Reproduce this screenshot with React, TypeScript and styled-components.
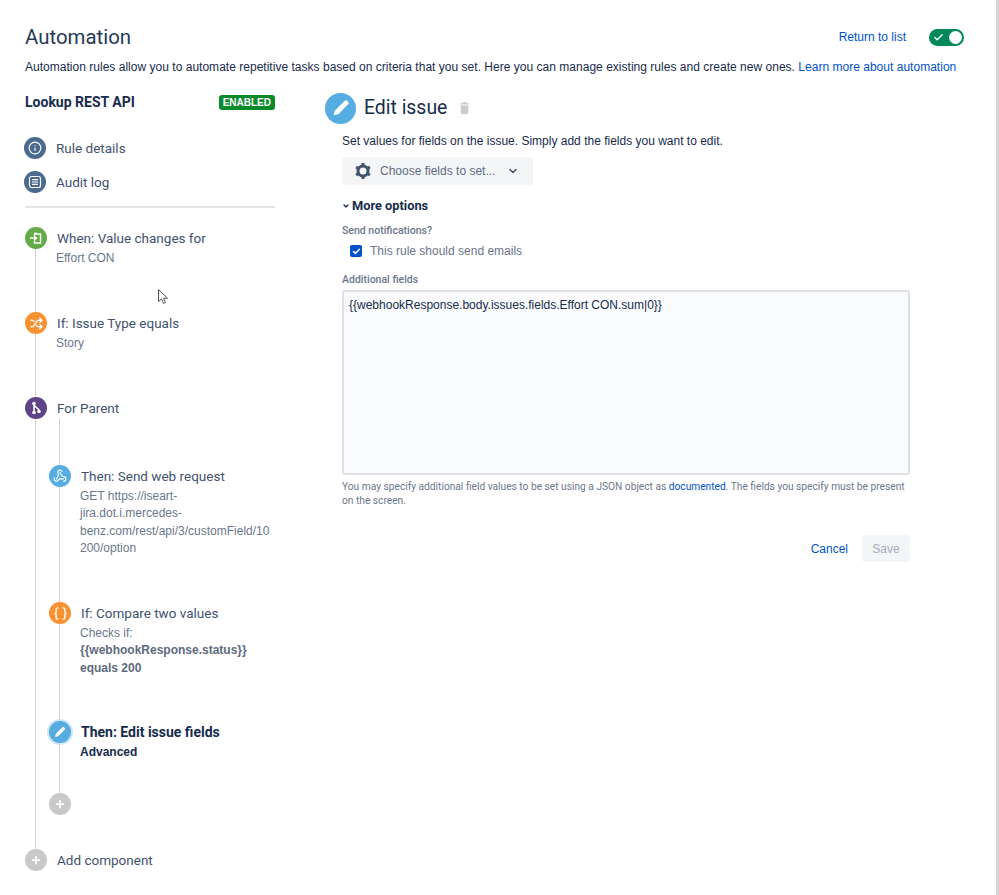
import React from "react";
import styled, { createGlobalStyle } from "styled-components";
import { Braces, Check, ChevronDown, Info, Plus, Shuffle, Webhook } from "lucide-react";

const Global = createGlobalStyle`
  html, body { margin: 0; padding: 0; background: #fff; }
  body { font-family: "Liberation Sans", Arial, sans-serif; font-size: 12px; color: #172b4d; }
`;
const UI = `"Roboto", "Open Sans", sans-serif`;

const Page = styled.div`
  width: 999px; height: 895px; box-sizing: border-box; padding: 25px 43px 0 25px; overflow: hidden; position: relative;
`;
const Header = styled.div`display: flex; align-items: center; justify-content: space-between; height: 24px;`;
const Title = styled.h1`margin: 0; font: 400 20.4px/24px ${UI}; color: #253858;`;
const HeaderRight = styled.div`display: flex; align-items: center; gap: 23px; margin-right: -8px;`;
const Link = styled.a`color: #0052cc; text-decoration: none;`;
const Toggle = styled.div`
  width: 35px; height: 17px; border-radius: 9px; background: #00875a; display: flex; align-items: center;
  justify-content: space-between; padding: 0 2px 0 4px; box-sizing: border-box; color: #fff;
`;
const Knob = styled.span`width: 13px; height: 13px; border-radius: 50%; background: #fff;`;
const Intro = styled.p`margin: 10px 0 0; line-height: 17px; white-space: nowrap; color: #172b4d; letter-spacing: .02px;`;
const Columns = styled.div`display: flex; margin-top: 16px;`;
const Sidebar = styled.aside`width: 250px; flex: none; margin-right: 50px;`;
const RuleHead = styled.div`display: flex; align-items: center; justify-content: space-between; height: 20px;`;
const RuleName = styled.div`font: 700 14px/20px ${UI}; color: #172b4d;`;
const Badge = styled.span`
  background: #0b8a2c; border-radius: 3px; color: #fff; font: 700 10px/15px "Liberation Sans", sans-serif;
  padding: 0 4px;
`;
const NavList = styled.div`display: flex; flex-direction: column; gap: 12px; margin-top: 25px; padding-bottom: 13px; border-bottom: 2px solid #e4e5e7;`;
const NavItem = styled.div`display: flex; align-items: center; gap: 10px; margin-left: -1px; font: 400 13.5px/22px ${UI}; color: #42526e;`;
const Dot = styled.span<{ $bg: string; $glow?: boolean }>`
  width: 22px; height: 22px; border-radius: 50%; background: ${p => p.$bg}; color: #fff; flex: none;
  display: flex; align-items: center; justify-content: center;
  ${p => p.$glow ? "box-shadow: 0 0 0 2px #cfe6f5;" : ""}
  position: relative; z-index: 1;
`;
const Timeline = styled.div`
  position: relative; margin-top: 19px;
  &::before { content: ""; position: absolute; left: 10px; top: 12px; bottom: 12px; width: 1px; background: #cfd0d2; }
`;
const Nested = styled.div`
  position: relative; margin: 46px 0 0 24px;
  &::before { content: ""; position: absolute; left: 10px; top: -46px; bottom: 12px; width: 1px; background: #cfd0d2; }
`;
const Step = styled.div<{ $h?: number; $gap?: number }>`
  display: grid; grid-template-columns: 22px 1fr; column-gap: 10px; min-height: ${p => p.$h ?? 22}px; align-content: start; position: relative;
  margin-top: ${p => p.$gap ?? 0}px;
`;
const StepTitle = styled.div<{ $bold?: boolean }>`font: ${p => p.$bold ? "700 14px" : "400 13.5px"}/22px ${UI}; color: ${p => p.$bold ? "#172b4d" : "#42526e"}; white-space: nowrap;`;
const StepSub = styled.div<{ $dark?: boolean }>`
  grid-column: 2; margin: 0 2px 0 -1px; padding-top: 1px; line-height: 17.3px; color: ${p => p.$dark ? "#172b4d" : "#6b778c"}; overflow-wrap: anywhere;
  ${p => p.$dark ? "font-weight: 700;" : ""}
  strong { color: #5e6a7d; }
`;
const Main = styled.main`flex: 1; min-width: 0;`;
const EditHead = styled.div`display: flex; align-items: center; height: 32px;`;
const BigDot = styled.span`width: 31px; height: 31px; border-radius: 50%; background: #55ade2; color: #fff; display: flex; align-items: center; justify-content: center;`;
const EditTitle = styled.h2`margin: 0 0 0 8px; font: 400 19.4px/32px ${UI}; color: #172b4d;`;
const Trash = styled.span`margin-left: 12px; display: flex; color: #c9cbcf;`;
const Form = styled.div`margin: 0 0 0 17px; width: 568px;`;
const Help = styled.p`margin: 9px 0 0; line-height: 17px; color: #172b4d; white-space: nowrap;`;
const Choose = styled.button`
  margin-top: 7px; width: 191px; height: 28px; border: 0; border-radius: 3px; background: #f4f5f7; color: #5e6c84;
  display: flex; align-items: center; padding: 0 0 0 12px; font: 400 12px "Liberation Sans", sans-serif;
`;
const ChooseLabel = styled.span`margin-left: 8px; margin-right: 12px;`;
const More = styled.div`display: flex; align-items: center; gap: 2px; margin-top: 12px; font: 700 12.8px/18px ${UI}; color: #172b4d;`;
const Label = styled.div<{ $gap: number }>`font: 500 10.5px/14px ${UI}; color: #6b778c; margin-top: ${p => p.$gap}px;`;
const CheckRow = styled.label`display: flex; align-items: center; gap: 8px; margin: 4px 0 0 8px; height: 18px; color: #6b778c;`;
const Box = styled.span`width: 12px; height: 12px; border-radius: 2px; background: #0052cc; color: #fff; display: flex; align-items: center; justify-content: center;`;
const Area = styled.div`
  margin-top: 3px; height: 185px; box-sizing: border-box; border: 2px solid #dfe1e6; border-radius: 3px; background: #fafbfc;
  padding: 5px; line-height: 17px; color: #172b4d;
`;
const Note = styled.p`margin: 5px 0 0; font: 400 10.2px/14px ${UI}; color: #6b778c;`;
const Actions = styled.div`display: flex; justify-content: flex-end; align-items: center; gap: 14px; margin-top: 27px;`;
const Save = styled.button`width: 48px; height: 27px; border: 0; border-radius: 3px; background: #f4f5f7; color: #a5adba; font: 400 12px "Liberation Sans", sans-serif;`;
const Scroll = styled.div`position: absolute; right: 0; top: 0; bottom: 0; width: 3px; background: #d6d6d6;`;
const Cursor = styled.svg`position: absolute; left: 158px; top: 289px;`;

const Pencil = ({ s }: { s: number }) => (
  <svg width={s} height={s} viewBox="0 0 16 16"><path fill="currentColor" d="M11.3 1.6a1.5 1.5 0 0 1 2.1 0l1 1a1.5 1.5 0 0 1 0 2.1L5.6 13.5 1.5 14.5l1-4.1z" /></svg>
);
const TrashIcon = () => (
  <svg width="11" height="12" viewBox="0 0 13 14"><path fill="currentColor" d="M4.5 0h4v1.5H12V3H1V1.5h3.5zM2 4h9v8.5A1.5 1.5 0 0 1 9.5 14h-6A1.5 1.5 0 0 1 2 12.5z" /></svg>
);
const AuditIcon = () => (
  <svg width="14" height="14" viewBox="0 0 14 14" fill="none" stroke="currentColor" strokeWidth="1.2">
    <rect x="1.5" y="1.5" width="11" height="11" rx="2" />
    <path d="M4 4.7h6M4 7h6M4 9.3h6" />
  </svg>
);
const TriggerIcon = () => (
  <svg width="14" height="14" viewBox="0 0 14 14" fill="none" stroke="currentColor" strokeWidth="1.5">
    <path d="M5.5 3H11.5V12H5.5V9.5M5.5 4.5V3" />
    <path d="M5 1.6h3v2.2H5z" fill="currentColor" stroke="none" />
    <path d="M1 7h6M5.2 5l2.2 2-2.2 2" strokeWidth="1.6" />
  </svg>
);
const BranchIcon = () => (
  <svg width="14" height="14" viewBox="0 0 14 14" fill="none" stroke="currentColor" strokeWidth="1.5">
    <path d="M5 2.5v9M5 4c.5 2.5 5 2.5 5 6" />
    <circle cx="5" cy="2.5" r="1.8" fill="currentColor" stroke="none" />
    <circle cx="5" cy="11.5" r="1.8" fill="currentColor" stroke="none" />
    <circle cx="10" cy="10.5" r="1.8" fill="currentColor" stroke="none" />
  </svg>
);
const GearIcon = () => (
  <svg width="18" height="18" viewBox="0 0 18 18" fill="none" stroke="#42526e">
    <circle cx="9" cy="9" r="5" strokeWidth="3" />
    <path strokeWidth="3" d="M9 1v3M9 14v3M2.1 5l2.6 1.5M13.3 11.5l2.6 1.5M2.1 13l2.6-1.5M13.3 6.5L15.9 5" />
  </svg>
);

export default function App() {
  return (
    <Page>
      <Global />
      <Header>
        <Title>Automation</Title>
        <HeaderRight>
          <Link href="#">Return to list</Link>
          <Toggle><Check size={11} strokeWidth={3} /><Knob /></Toggle>
        </HeaderRight>
      </Header>
      <Intro>
        Automation rules allow you to automate repetitive tasks based on criteria that you set. Here you can manage existing rules and create new ones. <Link href="#">Learn more about automation</Link>
      </Intro>
      <Columns>
        <Sidebar>
          <RuleHead><RuleName>Lookup REST API</RuleName><Badge>ENABLED</Badge></RuleHead>
          <NavList>
            <NavItem><Dot $bg="#4a6a8f"><Info size={14} strokeWidth={2} /></Dot>Rule details</NavItem>
            <NavItem><Dot $bg="#4a6a8f"><AuditIcon /></Dot>Audit log</NavItem>
          </NavList>
          <Timeline>
            <Step $h={85}><Dot $bg="#63ab47"><TriggerIcon /></Dot><StepTitle>When: Value changes for</StepTitle><StepSub>Effort CON</StepSub></Step>
            <Step $h={85}><Dot $bg="#f99130"><Shuffle size={13} strokeWidth={2.4} /></Dot><StepTitle>If: Issue Type equals</StepTitle><StepSub>Story</StepSub></Step>
            <Step><Dot $bg="#5e4387"><BranchIcon /></Dot><StepTitle>For Parent</StepTitle></Step>
            <Nested>
              <Step $h={137}><Dot $bg="#55ade2"><Webhook size={14} strokeWidth={2} /></Dot><StepTitle>Then: Send web request</StepTitle><StepSub>GET https://iseart-jira.dot.i.mercedes-benz.com/rest/api/3/customField/10200/option</StepSub></Step>
              <Step $h={119}><Dot $bg="#f99130"><Braces size={15} strokeWidth={2.2} /></Dot><StepTitle>If: Compare two values</StepTitle><StepSub>Checks if:<br /><strong>{"{{webhookResponse.status}}"}<br />equals 200</strong></StepSub></Step>
              <Step $h={72}><Dot $bg="#55ade2" $glow><Pencil s={12} /></Dot><StepTitle $bold>Then: Edit issue fields</StepTitle><StepSub $dark>Advanced</StepSub></Step>
              <Step><Dot $bg="#c9c9c9"><Plus size={12} strokeWidth={3.5} /></Dot></Step>
            </Nested>
            <Step $gap={34}><Dot $bg="#c9c9c9"><Plus size={12} strokeWidth={3.5} /></Dot><StepTitle>Add component</StepTitle></Step>
          </Timeline>
        </Sidebar>
        <Main>
          <EditHead>
            <BigDot><Pencil s={18} /></BigDot>
            <EditTitle>Edit issue</EditTitle>
            <Trash><TrashIcon /></Trash>
          </EditHead>
          <Form>
            <Help>Set values for fields on the issue. Simply add the fields you want to edit.</Help>
            <Choose>
              <GearIcon />
              <ChooseLabel>Choose fields to set...</ChooseLabel>
              <ChevronDown size={12} strokeWidth={3} color="#42526e" />
            </Choose>
            <More><ChevronDown size={8} strokeWidth={4} />More options</More>
            <Label $gap={9}>Send notifications?</Label>
            <CheckRow><Box><Check size={9} strokeWidth={4} /></Box>This rule should send emails</CheckRow>
            <Label $gap={13}>Additional fields</Label>
            <Area>{"{{webhookResponse.body.issues.fields.Effort CON.sum|0}}"}</Area>
            <Note>You may specify additional field values to be set using a JSON object as <Link href="#">documented</Link>. The fields you specify must be present on the screen.</Note>
            <Actions><Link href="#">Cancel</Link><Save>Save</Save></Actions>
          </Form>
        </Main>
      </Columns>
      <Cursor width="12" height="16" viewBox="0 0 12 16"><path d="M.5.5v12l3-2.5 2 4.5 2-1-2-4.3h4z" fill="#fff" stroke="#555" strokeWidth="1" /></Cursor>
      <Scroll />
    </Page>
  );
}
